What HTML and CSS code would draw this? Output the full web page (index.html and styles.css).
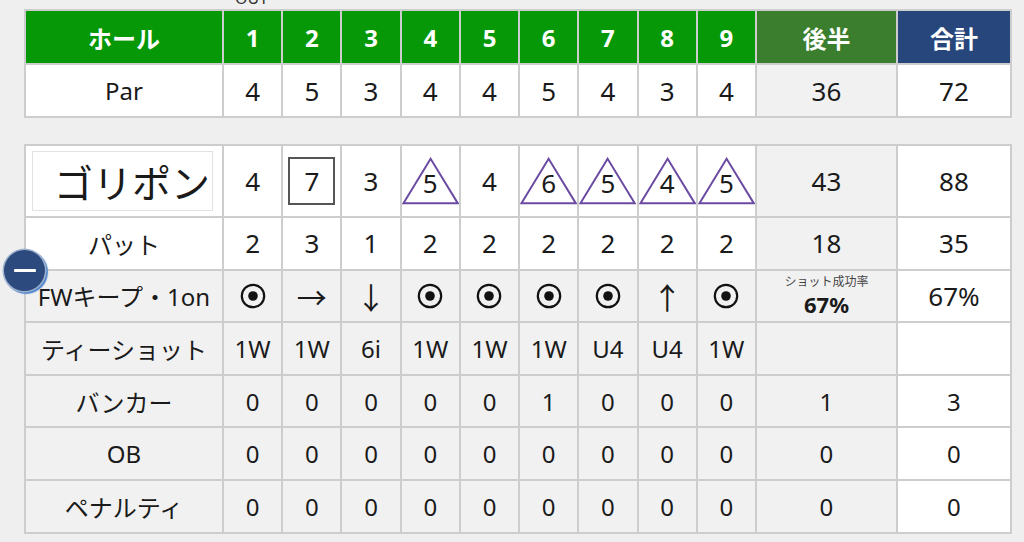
FILE: index.html
```html
<!DOCTYPE html>
<html lang="ja">
<head>
<meta charset="utf-8">
<title>スコアカード</title>
<link rel="stylesheet" href="styles.css">
</head>
<body>
<div class="page">
  <div class="caption-row"><span class="caption">OUT</span></div>

  <div class="card card-par">
    <div class="c head">ホール</div>
    <div class="c head">1</div>
    <div class="c head">2</div>
    <div class="c head">3</div>
    <div class="c head">4</div>
    <div class="c head">5</div>
    <div class="c head">6</div>
    <div class="c head">7</div>
    <div class="c head">8</div>
    <div class="c head">9</div>
    <div class="c head head-half">後半</div>
    <div class="c head head-total">合計</div>

    <div class="c w label">Par</div>
    <div class="c w num">4</div>
    <div class="c w num">5</div>
    <div class="c w num">3</div>
    <div class="c w num">4</div>
    <div class="c w num">4</div>
    <div class="c w num">5</div>
    <div class="c w num">4</div>
    <div class="c w num">3</div>
    <div class="c w num">4</div>
    <div class="c g num">36</div>
    <div class="c w num">72</div>
  </div>

  <div class="card card-score">
    <div class="c w name-cell"><div class="name-box">ゴリポン</div></div>
    <div class="c w num">4</div>
    <div class="c w num"><span class="bogey2">7</span></div>
    <div class="c w num">3</div>
    <div class="c w num tri"><svg class="tri-svg" viewBox="0 0 58 48"><polygon points="29,1.5 1.5,46.5 56.5,46.5"/></svg><span>5</span></div>
    <div class="c w num">4</div>
    <div class="c w num tri"><svg class="tri-svg" viewBox="0 0 58 48"><polygon points="29,1.5 1.5,46.5 56.5,46.5"/></svg><span>6</span></div>
    <div class="c w num tri"><svg class="tri-svg" viewBox="0 0 58 48"><polygon points="29,1.5 1.5,46.5 56.5,46.5"/></svg><span>5</span></div>
    <div class="c w num tri"><svg class="tri-svg" viewBox="0 0 58 48"><polygon points="29,1.5 1.5,46.5 56.5,46.5"/></svg><span>4</span></div>
    <div class="c w num tri"><svg class="tri-svg" viewBox="0 0 58 48"><polygon points="29,1.5 1.5,46.5 56.5,46.5"/></svg><span>5</span></div>
    <div class="c g num">43</div>
    <div class="c w num">88</div>

    <div class="c w label">パット</div>
    <div class="c w num">2</div>
    <div class="c w num">3</div>
    <div class="c w num">1</div>
    <div class="c w num">2</div>
    <div class="c w num">2</div>
    <div class="c w num">2</div>
    <div class="c w num">2</div>
    <div class="c w num">2</div>
    <div class="c w num">2</div>
    <div class="c g num">18</div>
    <div class="c w num">35</div>

    <div class="c g label">FWキープ・1on</div>
    <div class="c g"><svg class="dot" viewBox="0 0 26 26"><circle cx="13" cy="13" r="11.2"/><circle class="core" cx="13" cy="13" r="4.8"/></svg></div>
    <div class="c g arrow">→</div>
    <div class="c g arrow">↓</div>
    <div class="c g"><svg class="dot" viewBox="0 0 26 26"><circle cx="13" cy="13" r="11.2"/><circle class="core" cx="13" cy="13" r="4.8"/></svg></div>
    <div class="c g"><svg class="dot" viewBox="0 0 26 26"><circle cx="13" cy="13" r="11.2"/><circle class="core" cx="13" cy="13" r="4.8"/></svg></div>
    <div class="c g"><svg class="dot" viewBox="0 0 26 26"><circle cx="13" cy="13" r="11.2"/><circle class="core" cx="13" cy="13" r="4.8"/></svg></div>
    <div class="c g"><svg class="dot" viewBox="0 0 26 26"><circle cx="13" cy="13" r="11.2"/><circle class="core" cx="13" cy="13" r="4.8"/></svg></div>
    <div class="c g arrow">↑</div>
    <div class="c g"><svg class="dot" viewBox="0 0 26 26"><circle cx="13" cy="13" r="11.2"/><circle class="core" cx="13" cy="13" r="4.8"/></svg></div>
    <div class="c g rate"><span class="rate-label">ショット成功率</span><span class="rate-value">67%</span></div>
    <div class="c w num">67%</div>

    <div class="c g label">ティーショット</div>
    <div class="c g club">1W</div>
    <div class="c g club">1W</div>
    <div class="c g club">6i</div>
    <div class="c g club">1W</div>
    <div class="c g club">1W</div>
    <div class="c g club">1W</div>
    <div class="c g club">U4</div>
    <div class="c g club">U4</div>
    <div class="c g club">1W</div>
    <div class="c g"></div>
    <div class="c w"></div>

    <div class="c g label">バンカー</div>
    <div class="c g small">0</div>
    <div class="c g small">0</div>
    <div class="c g small">0</div>
    <div class="c g small">0</div>
    <div class="c g small">0</div>
    <div class="c g small">1</div>
    <div class="c g small">0</div>
    <div class="c g small">0</div>
    <div class="c g small">0</div>
    <div class="c g small">1</div>
    <div class="c w small">3</div>

    <div class="c g label">OB</div>
    <div class="c g small">0</div>
    <div class="c g small">0</div>
    <div class="c g small">0</div>
    <div class="c g small">0</div>
    <div class="c g small">0</div>
    <div class="c g small">0</div>
    <div class="c g small">0</div>
    <div class="c g small">0</div>
    <div class="c g small">0</div>
    <div class="c g small">0</div>
    <div class="c w small">0</div>

    <div class="c g label">ペナルティ</div>
    <div class="c g small">0</div>
    <div class="c g small">0</div>
    <div class="c g small">0</div>
    <div class="c g small">0</div>
    <div class="c g small">0</div>
    <div class="c g small">0</div>
    <div class="c g small">0</div>
    <div class="c g small">0</div>
    <div class="c g small">0</div>
    <div class="c g small">0</div>
    <div class="c w small">0</div>
  </div>

  <button class="collapse" type="button" aria-label="閉じる"><span class="minus"></span></button>
</div>
</body>
</html>
```

FILE: styles.css
```css
* { box-sizing: border-box; }

html, body {
  margin: 0;
  padding: 0;
  background: #efefef;
  overflow: hidden;
}

body {
  font-family: "Noto Sans", "Noto Sans CJK JP", sans-serif;
  color: #1a1a1a;
}

.page {
  position: relative;
  width: 1024px;
  height: 542px;
  padding-left: 24px;
}

.caption-row {
  display: grid;
  grid-template-columns: 197px 61px;
  grid-template-rows: 9px;
  width: 988px;
}

.caption {
  grid-column: 2;
  align-self: end;
  justify-self: center;
  font-size: 16px;
  line-height: 16px;
  margin-bottom: 3px;
  color: #333;
}

.card {
  display: grid;
  grid-template-columns: 196px repeat(9, 1fr) 139px 112px;
  gap: 2px;
  padding: 2px;
  width: 988px;
  background: #cdcdcd;
}

.card-par {
  grid-template-rows: 52px 51px;
}

.card-score {
  margin-top: 26px;
  grid-template-rows: 70px repeat(6, 50.6px);
}

.c {
  display: flex;
  align-items: center;
  justify-content: center;
  white-space: nowrap;
  position: relative;
}

.w { background: #ffffff; }
.g { background: #f1f1f1; }

.head {
  background: #069806;
  color: #ffffff;
  font-weight: 700;
  font-size: 24px;
}

.head-half { background: #3a7e2e; }
.head-total { background: #27467b; }

.label {
  font-size: 24px;
}

.num {
  font-size: 26px;
}

.club, .small {
  font-size: 24px;
}

.name-cell {
  padding: 5px 9px 5px 6px;
}

.name-box {
  width: 100%;
  height: 100%;
  border: 1px solid #e2e2e2;
  display: flex;
  align-items: center;
  justify-content: flex-end;
  padding-right: 2px;
  font-size: 39px;
  letter-spacing: 0;
}

.bogey2 {
  display: flex;
  align-items: center;
  justify-content: center;
  width: 47px;
  height: 48px;
  border: 2px solid #555555;
}

.tri span {
  position: relative;
  padding-top: 4px;
}

.tri-svg {
  position: absolute;
  left: 0;
  top: 11px;
  width: 100%;
  height: 48px;
}

.tri-svg polygon {
  fill: none;
  stroke: #6b4aa2;
  stroke-width: 2;
}

.dot {
  width: 26px;
  height: 26px;
}

.dot circle {
  fill: none;
  stroke: #111;
  stroke-width: 2.2;
}

.dot .core {
  fill: #111;
  stroke: none;
}

.arrow {
  font-size: 30px;
  font-family: "Noto Sans CJK JP", sans-serif;
}

.rate {
  flex-direction: column;
  justify-content: flex-start;
  padding-top: 2px;
}

.rate-label {
  font-size: 12px;
  line-height: 18px;
  color: #444;
}

.rate-value {
  font-size: 22px;
  line-height: 26px;
  font-weight: 700;
}

.collapse {
  position: absolute;
  left: 4px;
  top: 250px;
  width: 41px;
  height: 41px;
  border-radius: 50%;
  border: none;
  padding: 0;
  background: #2c4a7e;
  box-shadow: 0 0 0 1.5px #9fb3cf, 1.5px 1.5px 1px 1.5px #4f86cc;
  display: flex;
  align-items: center;
  justify-content: center;
}

.minus {
  display: block;
  width: 22px;
  height: 2.5px;
  background: #ffffff;
  border-radius: 1px;
}
```
